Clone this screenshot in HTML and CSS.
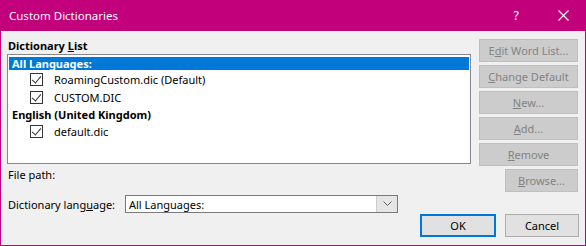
FILE: index.html
```html
<!DOCTYPE html>
<html lang="en">
<head>
  <meta charset="UTF-8">
  <title>Custom Dictionaries</title>
  <link rel="stylesheet" href="styles.css">
</head>
<body>
  <div class="dialog">
    <div class="titlebar">
      <span class="title">Custom Dictionaries</span>
      <span class="help">?</span>
      <svg class="close" width="11" height="11" viewBox="0 0 11 11">
        <path d="M0.5 0.5 L10.5 10.5 M10.5 0.5 L0.5 10.5" stroke="#fff" stroke-width="1.1" fill="none"/>
      </svg>
    </div>

    <div class="content">
      <div class="main">
        <div class="label bold">Dictionary <u>L</u>ist</div>
        <div class="listbox">
          <div class="row group selected">All Languages:</div>
          <div class="row item"><span class="check"></span>RoamingCustom.dic (Default)</div>
          <div class="row item"><span class="check"></span>CUSTOM.DIC</div>
          <div class="row group short-row">English (United Kingdom)</div>
          <div class="row item"><span class="check"></span>default.dic</div>
        </div>
        <div class="filepath">File path:</div>
        <div class="langline">
          <span class="lang-label">Dictionary lang<u>u</u>age:</span>
          <div class="select">
            <span class="select-text">All Languages:</span>
            <span class="arrow">
              <svg width="9" height="6" viewBox="0 0 9 6"><path d="M0.5 0.5 L4.5 4.5 L8.5 0.5" stroke="#606060" fill="none"/></svg>
            </span>
          </div>
        </div>
      </div>

      <div class="side">
        <button class="btn off">E<u>d</u>it Word List...</button>
        <button class="btn off"><u>C</u>hange Default</button>
        <button class="btn off"><u>N</u>ew...</button>
        <button class="btn off"><u>A</u>dd...</button>
        <button class="btn off"><u>R</u>emove</button>
        <button class="btn off short"><u>B</u>rowse...</button>
      </div>
    </div>

    <div class="footer">
      <button class="btn ok">OK</button>
      <button class="btn cancel">Cancel</button>
    </div>
  </div>
</body>
</html>
```

FILE: styles.css
```css
body {
  margin: 0;
  font-family: "Noto Sans", "Open Sans", sans-serif;
  font-size: 11px;
  color: #000;
}

.dialog {
  width: 586px;
  height: 246px;
  box-sizing: border-box;
  border: 1px solid #c3007b;
  border-top: none;
  background: #f0f0f0;
  display: flex;
  flex-direction: column;
}

.titlebar {
  height: 31px;
  flex-shrink: 0;
  background: #c3007b;
  color: #fff;
  display: flex;
  align-items: center;
  margin: 0 -1px;
  padding-left: 9px;
  font-size: 11.5px;
}

.title {
  flex: 1;
}

.help {
  font-size: 12.5px;
  margin-right: 39px;
}

.close {
  margin-right: 17px;
}

.content {
  display: flex;
  padding: 8px 0 0 6px;
}

.main {
  width: 464px;
}

.label {
  height: 15px;
  line-height: 14px;
  padding-left: 1px;
}

.bold {
  font-weight: bold;
}

.listbox {
  height: 110px;
  box-sizing: border-box;
  border: 1px solid #828790;
  background: #fff;
  padding: 2px 1px 1px;
}

.row {
  height: 18px;
  display: flex;
  align-items: center;
  white-space: nowrap;
}

.group {
  font-weight: bold;
  padding-left: 3px;
}

.selected {
  background: #0078d7;
  color: #fff;
  height: 13px;
}

.short-row {
  height: 16px;
}

.item {
  padding-left: 21px;
}

.check {
  width: 11px;
  height: 11px;
  border: 1px solid #333;
  margin-right: 11px;
  position: relative;
  flex-shrink: 0;
}

.check::after {
  content: "";
  position: absolute;
  left: 3px;
  top: 0;
  width: 4px;
  height: 8px;
  border-right: 1px solid #333;
  border-bottom: 1px solid #333;
  transform: rotate(40deg);
}

.filepath {
  margin-top: 3px;
  padding-left: 1px;
  height: 16px;
  line-height: 16px;
}

.langline {
  display: flex;
  align-items: center;
  margin-top: 12px;
}

.lang-label {
  width: 118px;
  padding-left: 1px;
  box-sizing: border-box;
  white-space: nowrap;
}

.select {
  width: 273px;
  height: 18px;
  box-sizing: border-box;
  border: 1px solid #7a7a7a;
  background: #fff;
  display: flex;
  align-items: center;
}

.select-text {
  flex: 1;
  padding-left: 3px;
  white-space: nowrap;
}

.arrow {
  width: 20px;
  height: 16px;
  background: #e5e5e5;
  border-left: 1px solid #cccccc;
  display: flex;
  align-items: center;
  justify-content: center;
}

.side {
  display: flex;
  flex-direction: column;
  align-items: flex-end;
  gap: 3px;
  margin-left: 8px;
}

.btn {
  font-family: inherit;
  font-size: 11px;
  height: 23px;
  width: 99px;
  padding: 0;
  box-sizing: border-box;
  border: 1px solid #adadad;
  background: #e1e1e1;
  color: #000;
  white-space: nowrap;
}

.btn.off {
  background: #cccccc;
  border-color: #bfbfbf;
  color: #838383;
}

.btn.short {
  width: 73px;
}

.footer {
  display: flex;
  justify-content: flex-end;
  gap: 9px;
  padding-right: 6px;
  margin-top: 1px;
}

.btn.ok {
  width: 76px;
  border: 2px solid #0078d7;
}

.btn.cancel {
  width: 74px;
}
```
